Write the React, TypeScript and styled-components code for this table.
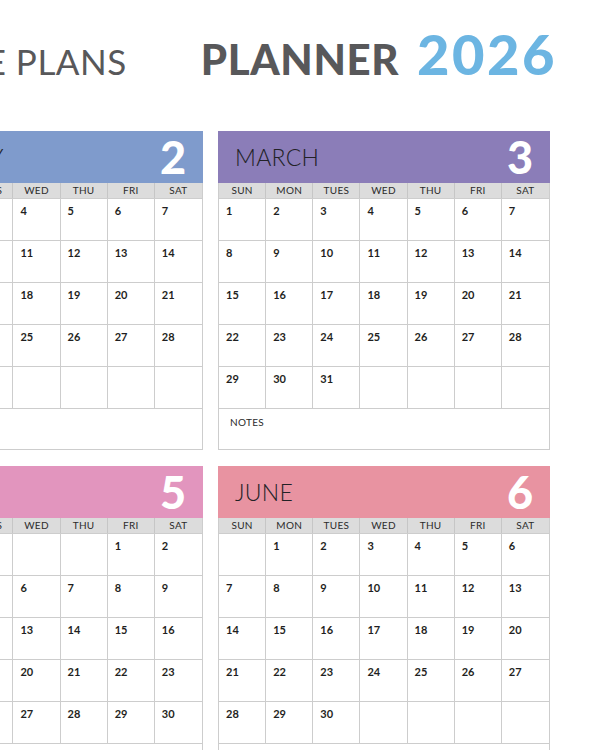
import styled, { createGlobalStyle } from 'styled-components'

type Month = {
  name: string
  num: number
  color: string
  offset: number
  days: number
}

const months: Month[] = [
  { name: 'FEBRUARY', num: 2, color: '#7f9bcc', offset: 0, days: 28 },
  { name: 'MARCH', num: 3, color: '#8b7db8', offset: 0, days: 31 },
  { name: 'MAY', num: 5, color: '#e295be', offset: 5, days: 31 },
  { name: 'JUNE', num: 6, color: '#e893a1', offset: 1, days: 30 },
]

const dayNames = ['SUN', 'MON', 'TUES', 'WED', 'THU', 'FRI', 'SAT']

const GlobalStyle = createGlobalStyle`
  * {
    box-sizing: border-box;
  }

  body {
    margin: 0;
    background: #ffffff;
    overflow: hidden;
    font-family: 'Lato', 'Liberation Sans', sans-serif;
  }
`

const Page = styled.div`
  width: 600px;
  height: 750px;
  overflow: hidden;
`

const Header = styled.header`
  display: flex;
  justify-content: flex-end;
  align-items: baseline;
  gap: 74px;
  height: 131px;
  padding: 20px 43px 0 0;
  white-space: nowrap;
`

const Brand = styled.div`
  font-size: 35px;
  font-weight: 400;
  color: #58585a;
  letter-spacing: 0.5px;
`

const Title = styled.h1`
  margin: 0;
  font-size: 42px;
  font-weight: 900;
  color: #58585a;
  letter-spacing: 0.6px;
`

const Year = styled.span`
  margin-left: 18px;
  font-size: 56px;
  color: #6cb5e2;
  letter-spacing: 2.5px;
`

const Grid = styled.div`
  display: grid;
  grid-template-columns: 332px 332px;
  column-gap: 15px;
  row-gap: 16px;
  margin-left: -129px;
`

const Panel = styled.section`
  width: 332px;
`

const MonthBar = styled.div<{ $color: string }>`
  display: flex;
  align-items: center;
  justify-content: space-between;
  height: 52px;
  padding: 0 17px 0 17px;
  background: ${(p) => p.$color};
`

const MonthName = styled.span`
  font-size: 23px;
  font-weight: 300;
  color: #222226;
  letter-spacing: 0.3px;
`

const MonthNum = styled.span`
  font-size: 45px;
  font-weight: 900;
  color: #ffffff;
  line-height: 1;
`

const Body = styled.div`
  border: 1.5px solid #cdcdcd;
  border-top: none;
`

const Week = styled.div`
  display: grid;
  grid-template-columns: repeat(7, 1fr);
`

const DayName = styled.div`
  height: 15px;
  background: #dcdcdc;
  border-right: 1.5px solid #c6c6c6;
  font-size: 10px;
  font-weight: 400;
  line-height: 15px;
  text-align: center;
  color: #2b2b2b;
  letter-spacing: 0.3px;

  &:nth-child(7n) {
    border-right: none;
  }
`

const Cell = styled.div`
  height: 42px;
  border-top: 1.5px solid #cdcdcd;
  border-right: 1.5px solid #cdcdcd;
  padding: 5px 7px;
  font-size: 11px;
  font-weight: 700;
  color: #1f1f22;

  &:nth-child(7n) {
    border-right: none;
  }
`

const Notes = styled.div`
  height: 41px;
  border-top: 1.5px solid #cdcdcd;
  padding: 7px 11px;
  font-size: 10px;
  font-weight: 400;
  color: #2b2b2b;
  letter-spacing: 0.3px;
`

const buildCells = (m: Month) => {
  const cells: string[] = []
  for (let i = 0; i < 35; i++) {
    const d = i - m.offset + 1
    let label = d >= 1 && d <= m.days ? String(d) : ''
    if (d + 7 <= m.days && i >= 28 && d + 7 > 35 - m.offset) label = `${d}/${d + 7}`
    cells.push(label)
  }
  return cells
}

const MonthPanel = ({ month }: { month: Month }) => (
  <Panel>
    <MonthBar $color={month.color}>
      <MonthName>{month.name}</MonthName>
      <MonthNum>{month.num}</MonthNum>
    </MonthBar>
    <Body>
      <Week>
        {dayNames.map((d) => (
          <DayName key={d}>{d}</DayName>
        ))}
      </Week>
      <Week>
        {buildCells(month).map((c, i) => (
          <Cell key={i}>{c}</Cell>
        ))}
      </Week>
      <Notes>NOTES</Notes>
    </Body>
  </Panel>
)

const App = () => (
  <Page>
    <GlobalStyle />
    <Header>
      <Brand>SIMPLE PLANS</Brand>
      <Title>
        PLANNER<Year>2026</Year>
      </Title>
    </Header>
    <Grid>
      {months.map((m) => (
        <MonthPanel key={m.name} month={m} />
      ))}
    </Grid>
  </Page>
)

export default App
